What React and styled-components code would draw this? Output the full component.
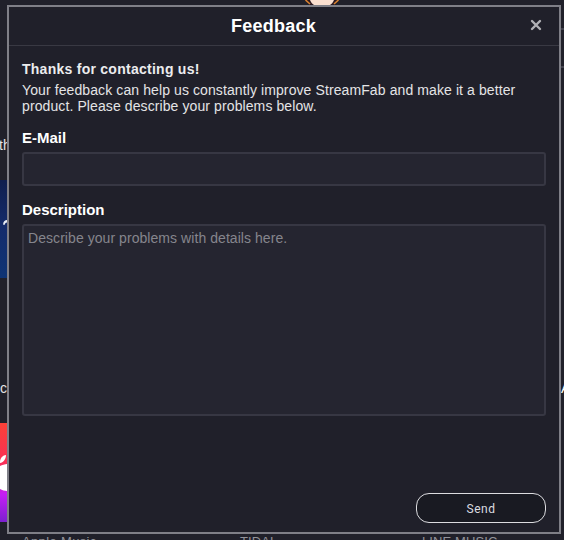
import React from "react";
import styled, { createGlobalStyle } from "styled-components";

function Feedback() {
  return (
    <Screen>
      <GlobalStyle />

      {/* top edge */}
      <TopStrip>
        <Avatar width="36" height="5" viewBox="0 0 36 5">
          <path d="M1 0H35L30 5H6Z" fill="#2b1820" />
          <path d="M1.5 0L6 4M34.5 0L30 4" stroke="#d9822f" strokeWidth="1.6" />
          <path d="M6 0H30C29 2 28 4 26 5H10C8 4 7 2 6 0Z" fill="#fbe0d0" />
        </Avatar>
      </TopStrip>

      {/* left edge */}
      <LeftStrip>
        <CutLabel $height={180} $top={137} $shift={-1}>
          th
        </CutLabel>
        <BlueTile>
          <svg width="7" height="98" viewBox="0 0 7 98">
            <path
              d="M3 44.5C3.5 41 5 40 7 40V42.5C5.5 42.5 5 43.5 4.5 45Z"
              fill="#e8ecf5"
            />
          </svg>
        </BlueTile>
        <CutLabel $height={145} $top={102} $shift={0}>
          c
        </CutLabel>
        <AppleTile>
          <svg width="7" height="99" viewBox="0 0 7 99">
            <path d="M0 39C0 35 3 32 6 32C6 36 3 40 0 40Z" fill="#fff" />
            <path d="M0 43C2 42 5 41 7 41V68C5 68 2 67 0 66Z" fill="#fff" />
          </svg>
        </AppleTile>
      </LeftStrip>

      <Dialog>
        <Header>
          <Title>Feedback</Title>
          <CloseButton aria-label="Close">
            <svg width="12" height="12" viewBox="0 0 12 12">
              <path
                d="M2 2L10 10M10 2L2 10"
                stroke="#b0b0b5"
                strokeWidth="2.4"
                strokeLinecap="round"
              />
            </svg>
          </CloseButton>
        </Header>
        <Body>
          <Thanks>Thanks for contacting us!</Thanks>
          <Message>
            Your feedback can help us constantly improve StreamFab and make it a
            better
            <br />
            product. Please describe your problems below.
          </Message>
          <Label htmlFor="email">E-Mail</Label>
          <Input id="email" type="text" />
          <Label htmlFor="description">Description</Label>
          <TextArea
            id="description"
            placeholder="Describe your problems with details here."
          />
          <Footer>
            <SendButton>Send</SendButton>
          </Footer>
        </Body>
      </Dialog>

      {/* right edge */}
      <RightStrip>
        <SearchEdge />
        <EdgeLabel>A</EdgeLabel>
      </RightStrip>

      {/* bottom edge */}
      <BottomStrip>
        <Caption $spacing={0.35}>Apple Music</Caption>
        <Caption $spacing={0.1}>TIDAL</Caption>
        <Caption $spacing={0.1}>LINE MUSIC</Caption>
      </BottomStrip>
    </Screen>
  );
}

export default Feedback;

const GlobalStyle = createGlobalStyle`
  * {
    box-sizing: border-box;
  }

  body {
    margin: 0;
    background: #20202a;
    font-family: "Liberation Sans", Arial, sans-serif;
  }
`;

const Screen = styled.div`
  display: grid;
  grid-template-columns: 7px 554px 3px;
  grid-template-rows: 5px 529px 6px;
  grid-template-areas:
    "top top top"
    "left dialog right"
    "bottom bottom bottom";
  width: 564px;
  height: 540px;
  overflow: hidden;
  background: #20202a;
`;

const TopStrip = styled.div`
  grid-area: top;
  display: flex;
  padding-left: 304px;
  overflow: hidden;
`;

const Avatar = styled.svg`
  display: block;
`;

const LeftStrip = styled.div`
  grid-area: left;
  margin-top: -5px;
  overflow: hidden;

  svg {
    display: block;
  }
`;

const CutLabel = styled.div`
  height: ${({ $height }) => $height}px;
  margin-left: ${({ $shift }) => $shift}px;
  padding-top: ${({ $top }) => $top}px;
  font-size: 14px;
  line-height: 16px;
  color: #e4e4e6;
`;

const BlueTile = styled.div`
  height: 98px;
  background: linear-gradient(#101f4e, #142c6c 50%, #0e3475);
`;

const AppleTile = styled.div`
  height: 99px;
  background: linear-gradient(#fb4138, #f92f55 40%, #c51ff5 72%, #7c1fd0);
`;

const Dialog = styled.section`
  grid-area: dialog;
  display: flex;
  flex-direction: column;
  border: 2px solid #7f7f87;
  background: #20202a;
`;

const Header = styled.header`
  display: grid;
  grid-template-columns: 22px 1fr 36px;
  align-items: center;
  height: 39px;
  padding-right: 5px;
  border-bottom: 1px solid #393943;
`;

const Title = styled.h1`
  grid-column: 2;
  margin: 0;
  padding-right: 2px;
  font-size: 18px;
  line-height: 20px;
  letter-spacing: 0.25px;
  text-align: center;
  color: #fff;
`;

const CloseButton = styled.button`
  display: flex;
  align-items: center;
  justify-content: center;
  margin-top: -2px;
  padding: 0;
  border: 0;
  background: none;
`;

const Body = styled.div`
  display: flex;
  flex: 1;
  flex-direction: column;
  padding: 14px 13px 9px;
`;

const Thanks = styled.strong`
  font-size: 14px;
  line-height: 18px;
  letter-spacing: 0.26px;
  color: #ececee;
`;

const Message = styled.p`
  margin: 4px 0 15px;
  font-size: 14px;
  line-height: 16px;
  letter-spacing: 0.1px;
  color: #e4e4e6;
  white-space: nowrap;
`;

const Label = styled.label`
  font-size: 15px;
  font-weight: bold;
  line-height: 18px;
  color: #fff;
`;

const Input = styled.input`
  width: 524px;
  height: 34px;
  margin: 5px 0 15px;
  padding: 0 4px;
  border: 2px solid #373743;
  border-radius: 3px;
  background: #252530;
  color: #e4e4e6;
`;

const TextArea = styled.textarea`
  display: block;
  width: 524px;
  height: 192px;
  margin-top: 5px;
  padding: 4px;
  border: 2px solid #373743;
  border-radius: 3px;
  background: #252530;
  color: #e4e4e6;
  font: 14px/16px "Liberation Sans", Arial, sans-serif;
  letter-spacing: 0.06px;
  resize: none;

  &::placeholder {
    color: #85858d;
  }
`;

const Footer = styled.footer`
  display: flex;
  justify-content: flex-end;
  margin-top: auto;
`;

const SendButton = styled.button`
  width: 130px;
  height: 30px;
  padding: 1px 0 0;
  border: 1px solid #dcdce0;
  border-radius: 13px;
  background: #191a22;
  color: #dcdce0;
  font: 12px/14px Roboto, sans-serif;
  letter-spacing: 0.5px;
`;

const RightStrip = styled.div`
  grid-area: right;
  overflow: hidden;
`;

const SearchEdge = styled.div`
  height: 40px;
  margin-top: 23px;
  border: solid #41414d;
  border-width: 2px 0;
`;

const EdgeLabel = styled.div`
  margin-top: 312px;
  font-size: 14px;
  line-height: 16px;
  color: #fff;
`;

const BottomStrip = styled.div`
  grid-area: bottom;
  display: grid;
  grid-template-columns: 218px 182px 1fr;
  padding-left: 22px;
  overflow: hidden;
`;

const Caption = styled.span`
  font-size: 13px;
  line-height: 16px;
  letter-spacing: ${({ $spacing }) => $spacing}px;
  color: #929299;
`;
